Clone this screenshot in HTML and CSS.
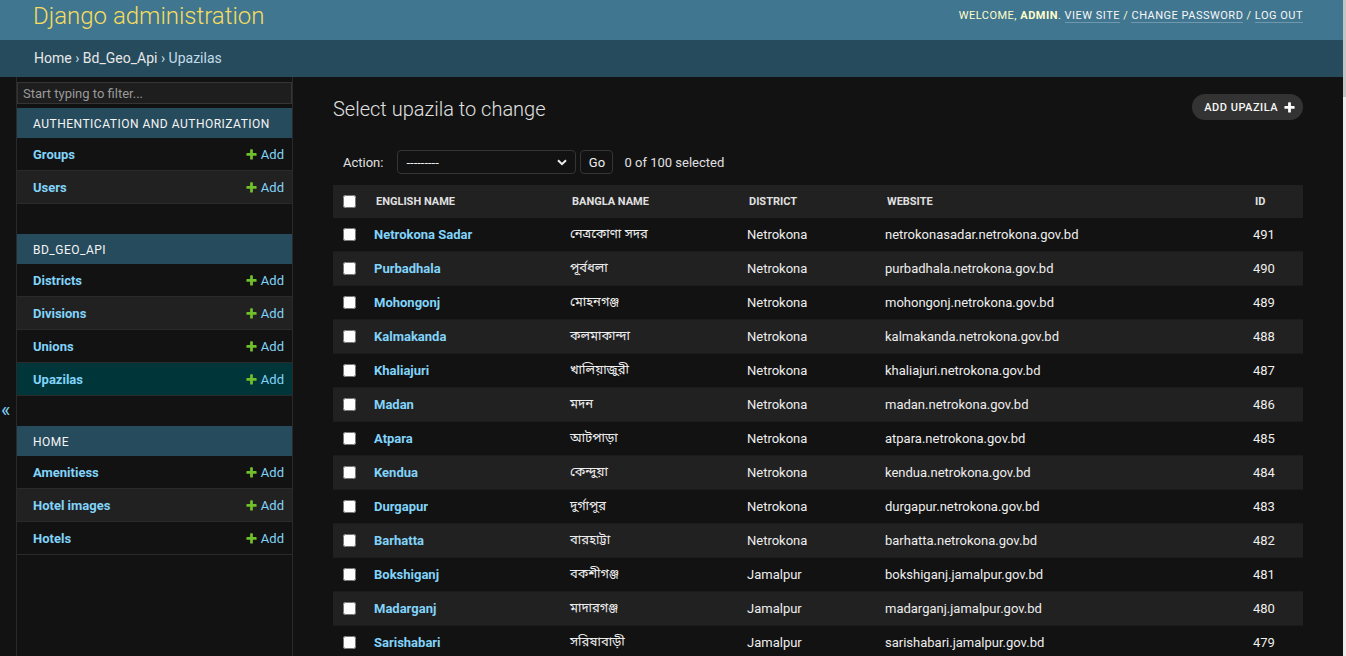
FILE: index.html
```html
<!DOCTYPE html>
<html lang="en">
<head>
<meta charset="utf-8">
<title>Select upazila to change | Django site admin</title>
<link rel="stylesheet" href="styles.css">
</head>
<body>
<div class="page">
  <div class="viewport">
    <header class="header">
      <div class="branding"><h1 class="site-name"><a href="#">Django administration</a></h1></div>
      <div class="user-tools">Welcome, <strong>admin</strong>. <a href="#">View site</a> / <a href="#">Change password</a> / <a href="#">Log out</a></div>
    </header>
    <nav class="breadcrumbs"><a href="#">Home</a> › <a href="#">Bd_Geo_Api</a> › Upazilas</nav>
    <div class="main">
      <button class="toggle-nav" type="button">«</button>
      <nav class="sidebar">
        <input class="nav-filter" type="search" placeholder="Start typing to filter...">
        <div class="module">
          <div class="caption">Authentication and Authorization</div>
          <div class="row"><a class="model" href="#">Groups</a><a class="addlink" href="#"><svg class="plus" width="13" height="13" viewBox="0 0 1792 1792"><path fill="#70bf2b" d="M1600 796v192q0 40-28 68t-68 28h-416v416q0 40-28 68t-68 28h-192q-40 0-68-28t-28-68v-416h-416q-40 0-68-28t-28-68v-192q0-40 28-68t68-28h416v-416q0-40 28-68t68-28h192q40 0 68 28t28 68v416h416q40 0 68 28t28 68z"/></svg>Add</a></div>
          <div class="row"><a class="model" href="#">Users</a><a class="addlink" href="#"><svg class="plus" width="13" height="13" viewBox="0 0 1792 1792"><path fill="#70bf2b" d="M1600 796v192q0 40-28 68t-68 28h-416v416q0 40-28 68t-68 28h-192q-40 0-68-28t-28-68v-416h-416q-40 0-68-28t-28-68v-192q0-40 28-68t68-28h416v-416q0-40 28-68t68-28h192q40 0 68 28t28 68v416h416q40 0 68 28t28 68z"/></svg>Add</a></div>
        </div>
        <div class="module">
          <div class="caption">Bd_Geo_Api</div>
          <div class="row"><a class="model" href="#">Districts</a><a class="addlink" href="#"><svg class="plus" width="13" height="13" viewBox="0 0 1792 1792"><path fill="#70bf2b" d="M1600 796v192q0 40-28 68t-68 28h-416v416q0 40-28 68t-68 28h-192q-40 0-68-28t-28-68v-416h-416q-40 0-68-28t-28-68v-192q0-40 28-68t68-28h416v-416q0-40 28-68t68-28h192q40 0 68 28t28 68v416h416q40 0 68 28t28 68z"/></svg>Add</a></div>
          <div class="row"><a class="model" href="#">Divisions</a><a class="addlink" href="#"><svg class="plus" width="13" height="13" viewBox="0 0 1792 1792"><path fill="#70bf2b" d="M1600 796v192q0 40-28 68t-68 28h-416v416q0 40-28 68t-68 28h-192q-40 0-68-28t-28-68v-416h-416q-40 0-68-28t-28-68v-192q0-40 28-68t68-28h416v-416q0-40 28-68t68-28h192q40 0 68 28t28 68v416h416q40 0 68 28t28 68z"/></svg>Add</a></div>
          <div class="row"><a class="model" href="#">Unions</a><a class="addlink" href="#"><svg class="plus" width="13" height="13" viewBox="0 0 1792 1792"><path fill="#70bf2b" d="M1600 796v192q0 40-28 68t-68 28h-416v416q0 40-28 68t-68 28h-192q-40 0-68-28t-28-68v-416h-416q-40 0-68-28t-28-68v-192q0-40 28-68t68-28h416v-416q0-40 28-68t68-28h192q40 0 68 28t28 68v416h416q40 0 68 28t28 68z"/></svg>Add</a></div>
          <div class="row current"><a class="model" href="#">Upazilas</a><a class="addlink" href="#"><svg class="plus" width="13" height="13" viewBox="0 0 1792 1792"><path fill="#70bf2b" d="M1600 796v192q0 40-28 68t-68 28h-416v416q0 40-28 68t-68 28h-192q-40 0-68-28t-28-68v-416h-416q-40 0-68-28t-28-68v-192q0-40 28-68t68-28h416v-416q0-40 28-68t68-28h192q40 0 68 28t28 68v416h416q40 0 68 28t28 68z"/></svg>Add</a></div>
        </div>
        <div class="module">
          <div class="caption">Home</div>
          <div class="row"><a class="model" href="#">Amenitiess</a><a class="addlink" href="#"><svg class="plus" width="13" height="13" viewBox="0 0 1792 1792"><path fill="#70bf2b" d="M1600 796v192q0 40-28 68t-68 28h-416v416q0 40-28 68t-68 28h-192q-40 0-68-28t-28-68v-416h-416q-40 0-68-28t-28-68v-192q0-40 28-68t68-28h416v-416q0-40 28-68t68-28h192q40 0 68 28t28 68v416h416q40 0 68 28t28 68z"/></svg>Add</a></div>
          <div class="row"><a class="model" href="#">Hotel images</a><a class="addlink" href="#"><svg class="plus" width="13" height="13" viewBox="0 0 1792 1792"><path fill="#70bf2b" d="M1600 796v192q0 40-28 68t-68 28h-416v416q0 40-28 68t-68 28h-192q-40 0-68-28t-28-68v-416h-416q-40 0-68-28t-28-68v-192q0-40 28-68t68-28h416v-416q0-40 28-68t68-28h192q40 0 68 28t28 68v416h416q40 0 68 28t28 68z"/></svg>Add</a></div>
          <div class="row"><a class="model" href="#">Hotels</a><a class="addlink" href="#"><svg class="plus" width="13" height="13" viewBox="0 0 1792 1792"><path fill="#70bf2b" d="M1600 796v192q0 40-28 68t-68 28h-416v416q0 40-28 68t-68 28h-192q-40 0-68-28t-28-68v-416h-416q-40 0-68-28t-28-68v-192q0-40 28-68t68-28h416v-416q0-40 28-68t68-28h192q40 0 68 28t28 68v416h416q40 0 68 28t28 68z"/></svg>Add</a></div>
        </div>
      </nav>
      <div class="content">
        <div class="content-head">
          <h1 class="title">Select upazila to change</h1>
          <a class="object-add" href="#">Add upazila<svg class="plus" width="13" height="13" viewBox="0 0 1792 1792"><path fill="#ffffff" d="M1600 796v192q0 40-28 68t-68 28h-416v416q0 40-28 68t-68 28h-192q-40 0-68-28t-28-68v-416h-416q-40 0-68-28t-28-68v-192q0-40 28-68t68-28h416v-416q0-40 28-68t68-28h192q40 0 68 28t28 68v416h416q40 0 68 28t28 68z"/></svg></a>
        </div>
        <div class="actions">
          <label class="action-label">Action:</label>
          <div class="select-wrap">
            <select class="action-select"><option>---------</option><option>Delete selected upazilas</option></select>
            <svg class="chevron" width="10" height="7" viewBox="0 0 10 7"><path d="M1 1.2 L5 5.2 L9 1.2" fill="none" stroke="#eeeeee" stroke-width="2"/></svg>
          </div>
          <button class="go" type="button">Go</button>
          <span class="counter">0 of 100 selected</span>
        </div>
        <table class="result-list">
          <colgroup>
            <col class="c-check"><col class="c-en"><col class="c-bn"><col class="c-district"><col class="c-web"><col class="c-id">
          </colgroup>
          <thead>
            <tr><th class="check"><input type="checkbox"></th><th>English name</th><th>Bangla name</th><th>District</th><th>Website</th><th>ID</th></tr>
          </thead>
          <tbody>
            <tr><td class="check"><input type="checkbox"></td><th><a href="#">Netrokona Sadar</a></th><td class="bn">নেত্রকোণা সদর</td><td>Netrokona</td><td>netrokonasadar.netrokona.gov.bd</td><td>491</td></tr>
            <tr><td class="check"><input type="checkbox"></td><th><a href="#">Purbadhala</a></th><td class="bn">পূর্বধলা</td><td>Netrokona</td><td>purbadhala.netrokona.gov.bd</td><td>490</td></tr>
            <tr><td class="check"><input type="checkbox"></td><th><a href="#">Mohongonj</a></th><td class="bn">মোহনগঞ্জ</td><td>Netrokona</td><td>mohongonj.netrokona.gov.bd</td><td>489</td></tr>
            <tr><td class="check"><input type="checkbox"></td><th><a href="#">Kalmakanda</a></th><td class="bn">কলমাকান্দা</td><td>Netrokona</td><td>kalmakanda.netrokona.gov.bd</td><td>488</td></tr>
            <tr><td class="check"><input type="checkbox"></td><th><a href="#">Khaliajuri</a></th><td class="bn">খালিয়াজুরী</td><td>Netrokona</td><td>khaliajuri.netrokona.gov.bd</td><td>487</td></tr>
            <tr><td class="check"><input type="checkbox"></td><th><a href="#">Madan</a></th><td class="bn">মদন</td><td>Netrokona</td><td>madan.netrokona.gov.bd</td><td>486</td></tr>
            <tr><td class="check"><input type="checkbox"></td><th><a href="#">Atpara</a></th><td class="bn">আটপাড়া</td><td>Netrokona</td><td>atpara.netrokona.gov.bd</td><td>485</td></tr>
            <tr><td class="check"><input type="checkbox"></td><th><a href="#">Kendua</a></th><td class="bn">কেন্দুয়া</td><td>Netrokona</td><td>kendua.netrokona.gov.bd</td><td>484</td></tr>
            <tr><td class="check"><input type="checkbox"></td><th><a href="#">Durgapur</a></th><td class="bn">দুর্গাপুর</td><td>Netrokona</td><td>durgapur.netrokona.gov.bd</td><td>483</td></tr>
            <tr><td class="check"><input type="checkbox"></td><th><a href="#">Barhatta</a></th><td class="bn">বারহাট্টা</td><td>Netrokona</td><td>barhatta.netrokona.gov.bd</td><td>482</td></tr>
            <tr><td class="check"><input type="checkbox"></td><th><a href="#">Bokshiganj</a></th><td class="bn">বকশীগঞ্জ</td><td>Jamalpur</td><td>bokshiganj.jamalpur.gov.bd</td><td>481</td></tr>
            <tr><td class="check"><input type="checkbox"></td><th><a href="#">Madarganj</a></th><td class="bn">মাদারগঞ্জ</td><td>Jamalpur</td><td>madarganj.jamalpur.gov.bd</td><td>480</td></tr>
            <tr><td class="check"><input type="checkbox"></td><th><a href="#">Sarishabari</a></th><td class="bn">সরিষাবাড়ী</td><td>Jamalpur</td><td>sarishabari.jamalpur.gov.bd</td><td>479</td></tr>
          </tbody>
        </table>
      </div>
    </div>
  </div>
  <div class="scrollbar"><div class="thumb"></div></div>
</div>
</body>
</html>
```
FILE: styles.css
```css
* { box-sizing: border-box; }

html, body {
  margin: 0;
  height: 100%;
  overflow: hidden;
  background: #121212;
}

body {
  font-family: Roboto, "Liberation Sans", sans-serif;
  font-size: 14px;
  color: #eeeeee;
}

.page {
  display: flex;
  height: 100vh;
}

.viewport {
  flex: 1;
  min-width: 0;
  display: flex;
  flex-direction: column;
}

.scrollbar {
  flex: none;
  width: 3px;
  background: #ececec;
}

.thumb {
  height: 97px;
  background: #c4c4c4;
}

/* header */
.header {
  flex: none;
  height: 40px;
  background: #417690;
  display: flex;
  justify-content: space-between;
  align-items: flex-start;
  padding: 0 40px 0 33px;
}

.site-name {
  margin: 0;
  padding-top: 2px;
  font-size: 24px;
  font-weight: 300;
  line-height: normal;
}

.site-name a {
  color: #f5dd5d;
  text-decoration: none;
}

.user-tools {
  padding-top: 9px;
  font-size: 11px;
  line-height: normal;
  letter-spacing: 0.5px;
  text-transform: uppercase;
  color: #ffffcc;
  white-space: nowrap;
}

.user-tools strong {
  font-weight: 700;
}

.user-tools a {
  color: #f7f7f7;
  text-decoration: none;
  border-bottom: 1px solid rgba(255, 255, 255, 0.25);
}

/* breadcrumbs */
.breadcrumbs {
  flex: none;
  height: 37px;
  line-height: 37px;
  padding-left: 34px;
  background: #264b5d;
  color: #c4dce8;
  font-size: 14px;
}

.breadcrumbs a {
  color: #e8e8e8;
  text-decoration: none;
}

/* main */
.main {
  flex: 1;
  min-height: 0;
  display: flex;
}

.toggle-nav {
  flex: none;
  width: 17px;
  height: 100vh;
  padding: 10px 0 0 1px;
  margin: 0;
  border: 0;
  border-right: 1px solid #2a2a2a;
  background: #121212;
  color: #81d4fa;
  font-family: Roboto, sans-serif;
  font-size: 20px;
  line-height: 1;
  display: flex;
  align-items: center;
  justify-content: flex-start;
}

.sidebar {
  flex: none;
  width: 276px;
  border-right: 1px solid #2a2a2a;
}

.nav-filter {
  display: block;
  width: 100%;
  height: 22px;
  margin: 5px 0 4px;
  padding: 2px 5px;
  border: 1px solid #353535;
  background: #1e1e1e;
  color: #eeeeee;
  font-family: Roboto, sans-serif;
  font-size: 13px;
  outline: none;
}

.nav-filter::placeholder {
  color: #9a9a9a;
}

.module {
  margin-bottom: 30px;
}

.caption {
  height: 30px;
  line-height: 32px;
  padding-left: 16px;
  background: #264b5d;
  color: #f5f5f5;
  font-size: 12px;
  letter-spacing: 0.5px;
  text-transform: uppercase;
  white-space: nowrap;
  overflow: hidden;
}

.row {
  height: 33px;
  display: flex;
  align-items: center;
  justify-content: space-between;
  padding: 0 8px 0 16px;
  border-bottom: 1px solid #2a2a2a;
  font-size: 13px;
}

.row:nth-child(odd) {
  background: #212121;
}

.row.current {
  background: #00363a;
}

.model {
  color: #81d4fa;
  font-weight: 700;
  text-decoration: none;
}

.addlink {
  display: inline-flex;
  align-items: center;
  gap: 3px;
  color: #81d4fa;
  text-decoration: none;
}

.plus {
  display: block;
  flex: none;
}

/* content */
.content {
  flex: 1;
  min-width: 0;
  padding: 17px 40px 0;
}

.content-head {
  display: flex;
  justify-content: space-between;
  align-items: flex-start;
  height: 26px;
}

.title {
  margin: 3px 0 0;
  font-size: 20px;
  font-weight: 300;
  line-height: normal;
  color: #e0e0e0;
}

.object-add {
  display: flex;
  align-items: center;
  gap: 5px;
  height: 26px;
  padding: 0 7px 0 12px;
  border-radius: 15px;
  background: #333333;
  color: #f7f7f7;
  font-size: 11px;
  font-weight: 500;
  letter-spacing: 0.5px;
  text-transform: uppercase;
  text-decoration: none;
}

.actions {
  display: flex;
  align-items: center;
  height: 24px;
  margin-top: 30px;
  padding-left: 10px;
  font-size: 13px;
  color: #e0e0e0;
}

.action-label {
  margin-right: 14px;
}

.select-wrap {
  position: relative;
}

.action-select {
  appearance: none;
  -webkit-appearance: none;
  display: block;
  width: 179px;
  height: 24px;
  padding: 0 24px 0 8px;
  border: 1px solid #353535;
  border-radius: 4px;
  background: #121212;
  color: #eeeeee;
  font-family: Roboto, sans-serif;
  font-size: 13px;
}

.chevron {
  position: absolute;
  right: 9px;
  top: 9px;
}

.go {
  height: 24px;
  width: 33px;
  margin-left: 4px;
  padding: 0;
  border: 1px solid #353535;
  border-radius: 4px;
  background: #121212;
  color: #eeeeee;
  font-family: Roboto, sans-serif;
  font-size: 13px;
}

.counter {
  margin-left: 11px;
}

/* table */
.result-list {
  width: 100%;
  margin-top: 11px;
  border-collapse: separate;
  border-spacing: 0;
  table-layout: fixed;
}

.c-check { width: 33px; }
.c-en { width: 196px; }
.c-bn { width: 177px; }
.c-district { width: 138px; }
.c-web { width: 368px; }
.c-id { width: 58px; }

.result-list thead th {
  height: 33px;
  padding: 0 10px;
  background: #212121;
  color: #e0e0e0;
  font-size: 11px;
  font-weight: 700;
  text-transform: uppercase;
  text-align: left;
  vertical-align: middle;
  white-space: nowrap;
}

.result-list tbody td,
.result-list tbody th {
  height: 34px;
  padding: 0 8px;
  border-bottom: 1px solid #1c1c1c;
  font-size: 13px;
  font-weight: 400;
  text-align: left;
  vertical-align: middle;
  white-space: nowrap;
  color: #eeeeee;
}

.result-list tbody tr:nth-child(even) {
  background: #212121;
}

.result-list .check {
  padding-left: 10px;
}

.result-list input[type="checkbox"] {
  display: block;
  width: 13px;
  height: 13px;
  margin: 0;
}

.result-list tbody th a {
  color: #81d4fa;
  font-weight: 700;
  text-decoration: none;
}

.result-list .bn {
  font-family: "Noto Sans Bengali", "Noto Serif Bengali", "Lohit Bengali", "Mukti", "FreeSerif", Roboto, sans-serif;
}
```
